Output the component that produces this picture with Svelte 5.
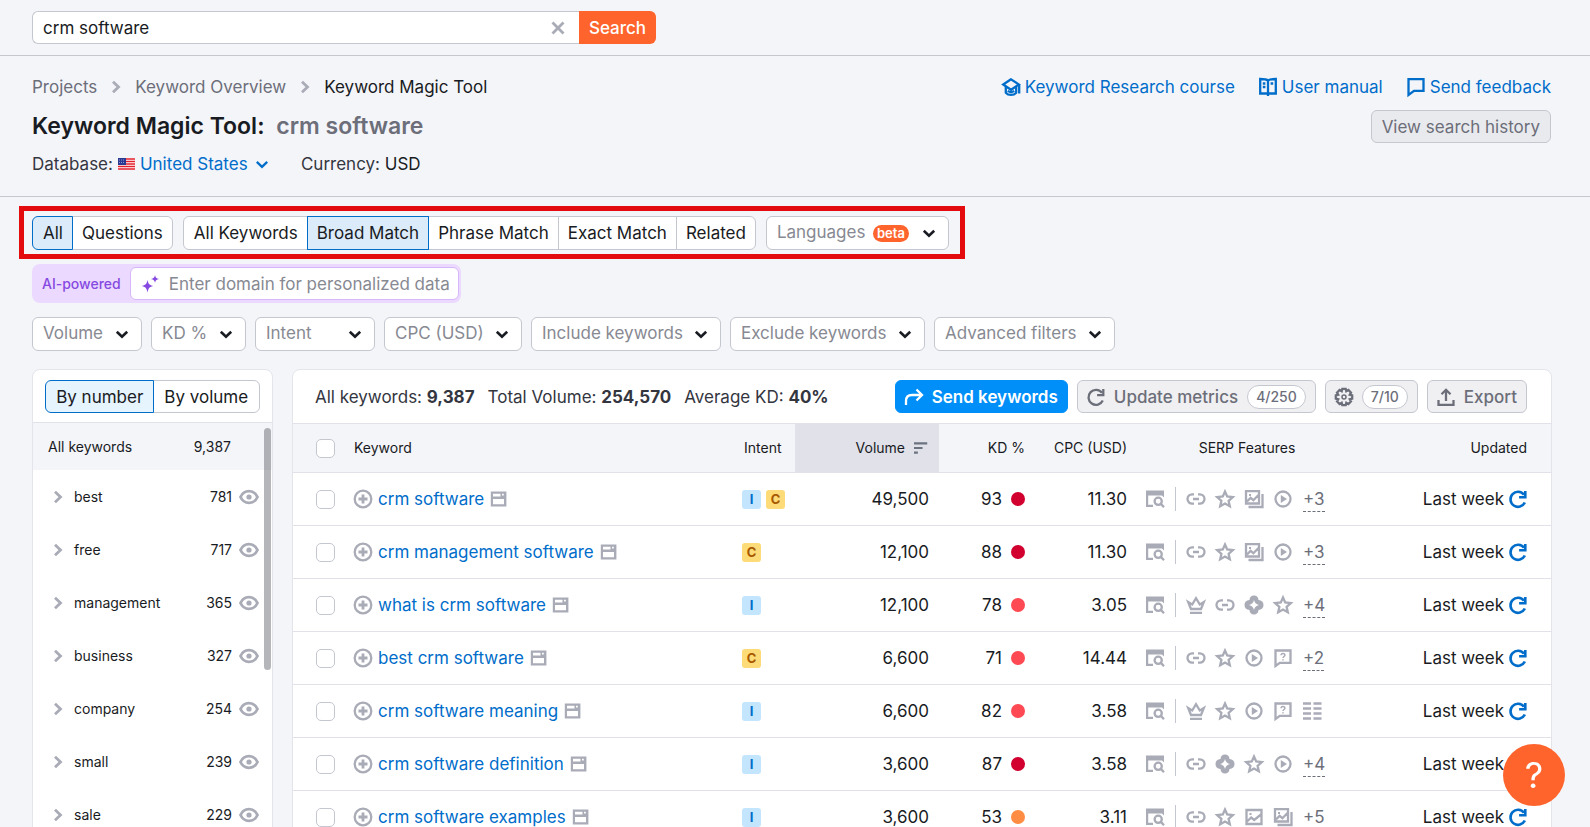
<script lang="ts">
  type Row = {
    keyword: string;
    intent: string[];
    volume: string;
    kd: number;
    cpc: string;
    serp: string[];
    more?: number;
  };

  let query = $state("crm software");
  let domain = $state("");
  let scope = $state("All");
  let match = $state("Broad Match");
  let sortBy = $state("By number");

  const scopes = ["All", "Questions"];
  const matches = ["All Keywords", "Broad Match", "Phrase Match", "Exact Match", "Related"];
  const sorts = ["By number", "By volume"];
  const filters = ["Volume", "KD %", "Intent", "CPC (USD)", "Include keywords", "Exclude keywords", "Advanced filters"];

  const groups = [
    { name: "best", count: 781 },
    { name: "free", count: 717 },
    { name: "management", count: 365 },
    { name: "business", count: 327 },
    { name: "company", count: 254 },
    { name: "small", count: 239 },
    { name: "sale", count: 229 },
  ];

  const rows: Row[] = [
    { keyword: "crm software", intent: ["I", "C"], volume: "49,500", kd: 93, cpc: "11.30", serp: ["link", "star", "images", "play"], more: 3 },
    { keyword: "crm management software", intent: ["C"], volume: "12,100", kd: 88, cpc: "11.30", serp: ["link", "star", "images", "play"], more: 3 },
    { keyword: "what is crm software", intent: ["I"], volume: "12,100", kd: 78, cpc: "3.05", serp: ["crown", "link", "ai", "star"], more: 4 },
    { keyword: "best crm software", intent: ["C"], volume: "6,600", kd: 71, cpc: "14.44", serp: ["link", "star", "play", "ask"], more: 2 },
    { keyword: "crm software meaning", intent: ["I"], volume: "6,600", kd: 82, cpc: "3.58", serp: ["crown", "star", "play", "ask", "list"] },
    { keyword: "crm software definition", intent: ["I"], volume: "3,600", kd: 87, cpc: "3.58", serp: ["link", "ai", "star", "play"], more: 4 },
    { keyword: "crm software examples", intent: ["I"], volume: "3,600", kd: 53, cpc: "3.11", serp: ["link", "star", "image", "images"], more: 5 },
  ];

  function kdLevel(kd: number): string {
    if (kd >= 85) return "very-hard";
    return kd >= 70 ? "hard" : "difficult";
  }

  // 18x18 glyphs, drawn with the current colour
  const icons: Record<string, string> = {
    right: '<path class="bold" d="M6 3.800 11.500 9 6 14.200"/>',
    down: '<path d="M3.800 6.800 9 11.800l5.200-5"/>',
    close: '<path class="bold" d="m3.500 3.500 11 11M14.500 3.500l-11 11"/>',
    course: '<path d="M9 1.300 1.200 6.500 9 11.800l7.800-5.300z"/><path d="M3.800 8.500v6.200c2.500 3 7.900 3 10.400 0V8.500M5.800 12.800c2 1.500 4.400 1.500 6.400 0M17.200 6.500v9"/>',
    book: '<path d="M9 2.600C7.500 1 5 1 1.200 1v14.500H9h7.800V1C13 1 10.500 1 9 2.600zM9 2.600V18M3.800 5.500h2.600M3.800 9h2.600M11.600 5.500h2.600"/>',
    chat: '<path d="M1.500 1.200h15v11.600H7L1.500 17z"/>',
    eye: '<path class="bold" d="M0.500 9c1.800-4 5-5.800 8.500-5.800s6.700 1.800 8.500 5.800c-1.800 4-5 5.800-8.500 5.800S2.300 13 .5 9z"/><circle class="fill" cx="9" cy="9" r="2.600"/>',
    plus: '<circle cx="9" cy="9" r="8.300"/><path class="bold" d="M9 4.500v9M4.500 9h9"/>',
    page: '<path class="fill" fill-rule="evenodd" d="M.8 1.500h15.600v15H.8zM3 3.800v2.800h7.500V3.800zM12 3.800v1.800h1.800V3.800zM3 9v5.200h11V9z"/>',
    send: '<path d="M1 17v-4c0-3.800 2-6 6-6h10M11.500 1.500 17 7l-5.500 5.500"/>',
    refresh: '<path d="M15.800 12.500A7.500 7.500 0 1 1 15 4.800"/><path d="M16.300 1v6.200h-6.200"/>',
    gear: '<path d="M7.300.8h3.400l.6 2.400 2.100-1.200 2.600 2.600-1.200 2.100 2.400.6v3.400l-2.400.6 1.200 2.100-2.600 2.600-2.100-1.200-.6 2.400H7.300l-.6-2.400L4.600 16 2 13.400l1.200-2.100-2.400-.6V7.300l2.400-.6L2 4.600 4.600 2l2.100 1.200z"/><circle class="thin" cx="9" cy="9" r="2"/>',
    export: '<path d="M1.500 12v4.800h15V12M9 13V2M4.500 6.200 9 1.800l4.500 4.400"/>',
    sort: '<path class="bold" d="M0 3h17M0 9h11M0 15h5"/>',
    serp: '<path class="fill" d="M0 .5h18v7l-2-2H2.200v9.300H7V17H0z"/><circle cx="12.200" cy="11.300" r="3.600"/><path d="m14.900 13.900 3.100 3.300"/>',
    link: '<path d="M7 4.300H5.200a4.500 4.500 0 0 0 0 9.400H7M11 4.300h1.800a4.500 4.500 0 0 1 0 9.400H11M6 9h6"/>',
    star: '<path d="m9 1.500 2.200 5 5.600.6-4.200 3.700 1.200 5.500L9 13.500l-4.800 2.800 1.200-5.500-4.200-3.700 5.600-.6z"/>',
    image: '<path d="M1.500 2h15v14h-15zM2 13.500 6.200 9.500l3 2.500L16 6.500"/><path class="fill" d="M4.500 5h2v2h-2z"/>',
    images: '<path d="M1 1.200h13v12.300H1zM2 11.500l3.600-3.600 2.800 2.300L13.500 5M17.500 4v13H3.500"/><path class="fill" d="M4 4h2v2H4z"/>',
    play: '<circle cx="9" cy="9" r="7.500"/><path class="fill" d="M6.800 5 13 9l-6.200 4z"/>',
    crown: '<path d="M1.200 6 4 13h10l2.800-7-4 2.500L9 2.200 5.200 8.500zM3 16.800h12"/>',
    ai: '<path class="fill" fill-rule="evenodd" d="M9-.5c2.800 0 4.300 1.700 4.500 4.500 3.200.3 5 2.300 5 5s-1.800 4.700-5 5c-.2 2.800-1.700 4.500-4.500 4.500S4.700 16.800 4.500 14c-3.200-.3-5-2.300-5-5s1.800-4.700 5-5C4.700 1.200 6.200-.5 9-.5zM9 4C8.200 7 7 8.200 4 9c3 .8 4.200 2 5 5 .8-3 2-4.200 5-5-3-.8-4.200-2-5-5z"/>',
    ask: '<path d="M1.500 1.500h15v12.300H5.800L1.500 17z"/><path class="thin" d="M7.100 6.200c0-2.400 3.800-2.400 3.800 0 0 1.300-1.900 1.300-1.900 2.800M9 10.300v1.200"/>',
    list: '<path d="M0 1.500h8M10.500 1.500h8M0 6.500h8M10.500 6.500h8M0 11.500h8M10.500 11.500h8M0 16.500h8M10.500 16.500h8"/>',
    spark: '<path class="fill" d="M6.500 5c.8 4 2 5.200 6 6-4 .8-5.200 2-6 6.500-.8-4.500-2-5.700-6-6.500 4-.8 5.200-2 6-6zM14 0c.5 2.700 1.300 3.500 4 4-2.700.5-3.500 1.300-4 4-.5-2.700-1.300-3.500-4-4 2.700-.5 3.500-1.300 4-4z"/>',
  };
</script>

{#snippet icon(name: string)}
  <svg class="icon" viewBox="0 0 18 18" aria-hidden="true">{@html icons[name]}</svg>
{/snippet}

{#snippet pills(items: string[], current: string, pick: (v: string) => void)}
  <div class="pills">
    {#each items as item}
      <button class:active={item === current} onclick={() => pick(item)}>{item}</button>
    {/each}
  </div>
{/snippet}

<header class="topbar">
  <form class="search" onsubmit={(e) => e.preventDefault()}>
    <div class="search-box">
      <input type="text" aria-label="Keyword" bind:value={query} />
      <button type="button" class="clear" aria-label="Clear" onclick={() => (query = "")}>{@render icon("close")}</button>
    </div>
    <button class="search-btn">Search</button>
  </form>
</header>

<section class="intro">
  <div class="intro-left">
    <nav class="crumbs" aria-label="Breadcrumbs">
      <a href="#projects">Projects</a>
      {@render icon("right")}
      <a href="#overview">Keyword Overview</a>
      {@render icon("right")}
      <span>Keyword Magic Tool</span>
    </nav>
    <h1>Keyword Magic Tool: <span>crm software</span></h1>
    <div class="meta">
      <label class="database">
        <span>Database:</span>
        <svg class="flag" viewBox="0 0 17 12" aria-hidden="true">
          <rect width="17" height="12" fill="#fff" />
          <path d="M0 1h17M0 3.500h17M0 6h17M0 8.500h17M0 11h17" stroke="#e5202e" stroke-width="1.500" />
          <rect width="8" height="7" fill="#2b3990" />
          <path d="M1 2h6M1 4.500h6" stroke="#8d97d2" stroke-dasharray="1 1" />
        </svg>
        <span class="picker">
          <select><option>United States</option></select>
          {@render icon("down")}
        </span>
      </label>
      <span>Currency: <b>USD</b></span>
    </div>
  </div>
  <div class="intro-right">
    <div class="links">
      <a href="#course">{@render icon("course")}Keyword Research course</a>
      <a href="#manual">{@render icon("book")}User manual</a>
      <a href="#feedback">{@render icon("chat")}Send feedback</a>
    </div>
    <button class="btn history">View search history</button>
  </div>
</section>

<section class="controls">
  <div class="highlight">
    {@render pills(scopes, scope, (v) => (scope = v))}
    {@render pills(matches, match, (v) => (match = v))}
    <label class="filter languages">
      <select aria-label="Languages"><option>Languages</option></select>
      <span class="beta">beta</span>
      {@render icon("down")}
    </label>
  </div>

  <label class="ai">
    <span class="ai-label">AI-powered</span>
    <span class="ai-box">
      {@render icon("spark")}
      <input type="text" placeholder="Enter domain for personalized data" bind:value={domain} />
    </span>
  </label>

  <div class="filters">
    {#each filters as name}
      <label class="filter" class:wide={name === "Intent"}>
        <select aria-label={name}><option>{name}</option></select>
        {@render icon("down")}
      </label>
    {/each}
  </div>
</section>

<main>
  <aside class="panel">
    <div class="sorts">
      {@render pills(sorts, sortBy, (v) => (sortBy = v))}
    </div>
    <div class="groups">
      <div class="total"><span>All keywords</span><span>9,387</span></div>
      <ul>
        {#each groups as g}
          <li>
            <button class="toggle" aria-label="Expand {g.name}">{@render icon("right")}</button>
            <span class="name">{g.name}</span>
            <span>{g.count}</span>
            <button class="toggle eye" aria-label="Exclude {g.name}">{@render icon("eye")}</button>
          </li>
        {/each}
      </ul>
      <div class="thumb"></div>
    </div>
  </aside>

  <div class="panel results">
    <div class="toolbar">
      <div class="stats">
        <span>All keywords: <b>9,387</b></span>
        <span>Total Volume: <b>254,570</b></span>
        <span>Average KD: <b>40%</b></span>
      </div>
      <div class="actions">
        <button class="btn primary">{@render icon("send")}Send keywords</button>
        <button class="btn">{@render icon("refresh")}Update metrics<span class="quota">4/250</span></button>
        <button class="btn" aria-label="Settings, 7 of 10 columns">{@render icon("gear")}<span class="quota">7/10</span></button>
        <button class="btn">{@render icon("export")}Export</button>
      </div>
    </div>

    <table>
      <colgroup>
        <col class="c-check" /><col /><col class="c-intent" /><col class="c-volume" />
        <col class="c-kd" /><col class="c-cpc" /><col class="c-serp" /><col class="c-updated" />
      </colgroup>
      <thead>
        <tr>
          <th class="check"><input type="checkbox" aria-label="Select all" /></th>
          <th>Keyword</th>
          <th class="intent">Intent</th>
          <th class="num volume sorted"><span>Volume{@render icon("sort")}</span></th>
          <th class="num">KD %</th>
          <th class="num">CPC (USD)</th>
          <th class="serp-head">SERP Features</th>
          <th class="num updated">Updated</th>
        </tr>
      </thead>
      <tbody>
        {#each rows as row}
          <tr>
            <td class="check"><input type="checkbox" aria-label="Select {row.keyword}" /></td>
            <td>
              <div class="cell keyword">
                <button class="toggle" aria-label="Add {row.keyword}">{@render icon("plus")}</button>
                <a href="#keyword">{row.keyword}</a>
                {@render icon("page")}
              </div>
            </td>
            <td class="intent">
              <div class="cell badges">
                {#each row.intent as i}<span class="badge {i}">{i}</span>{/each}
              </div>
            </td>
            <td class="num volume">{row.volume}</td>
            <td class="num"><div class="cell kd">{row.kd}<i class="dot {kdLevel(row.kd)}"></i></div></td>
            <td class="num">{row.cpc}</td>
            <td class="serp">
              <div class="cell features">
                {@render icon("serp")}
                <span class="rule"></span>
                {#each row.serp as f}{@render icon(f)}{/each}
                {#if row.more}<button class="more">+{row.more}</button>{/if}
              </div>
            </td>
            <td class="num updated">
              <div class="cell week">Last week<button class="toggle" aria-label="Refresh">{@render icon("refresh")}</button></div>
            </td>
          </tr>
        {/each}
      </tbody>
    </table>
  </div>
</main>

<button class="help" aria-label="Help">?</button>

<style>
  :global(html) { scrollbar-width: none; }
  :global(body) { background: #f4f5f9; color: #191b23; font: 17px/24px Inter, "Liberation Sans", sans-serif; }
  :global(#app *) { box-sizing: border-box; }

  button, input, select { font: inherit; color: inherit; margin: 0; }
  button { padding: 0; border: 0; background: none; cursor: pointer; }
  a { color: #006dca; text-decoration: none; }
  select { appearance: none; border: 0; background: none; cursor: pointer; }

  .icon { width: 18px; height: 18px; flex: none; fill: none; stroke: currentColor; stroke-width: 2.3; overflow: visible; }
  .icon :global(.fill) { fill: currentColor; stroke: none; }
  .icon :global(.thin) { stroke-width: 1.5; }
  .icon :global(.bold) { stroke-width: 2.8; }

  .topbar { padding: 11px 32px; border-bottom: 1px solid #c4c7cf; }
  .search { display: flex; max-width: 624px; }
  .search-box { flex: 1; display: flex; align-items: center; height: 33px; background: #fff; border: 1px solid #c4c7cf; border-right: 0; border-radius: 6px 0 0 6px; }
  .search-box input { flex: 1; min-width: 0; height: 100%; padding: 0 10px; border: 0; background: none; outline: none; }
  .clear { display: flex; padding: 0 12px; color: #a9abb6; }
  .search-btn { padding: 0 10px; background: #ff642d; color: #fff; font-weight: 500; border-radius: 0 6px 6px 0; }

  .intro { display: flex; justify-content: space-between; padding: 19px 39px 20px 32px; border-bottom: 1px solid #c4c7cf; }
  .crumbs { display: flex; align-items: center; gap: 10px; }
  .crumbs a { color: #6c6e79; }
  .crumbs .icon { color: #a9abb6; }
  h1 { margin: 11px 0 10px; font-size: 23px; line-height: 32px; font-weight: 600; }
  h1 span { margin-left: 6px; color: #6c6e79; }
  .meta { display: flex; gap: 30px; color: #34363f; }
  .meta b { font-weight: 400; color: #191b23; }
  .database { display: flex; align-items: center; gap: 5px; }
  .flag { width: 17px; height: 12px; }
  .picker { display: flex; align-items: center; gap: 5px; color: #006dca; }
  .picker select { padding: 0; }
  .intro-right { display: flex; flex-direction: column; align-items: flex-end; gap: 11px; }
  .links { display: flex; gap: 24px; }
  .links a { display: flex; align-items: center; gap: 5px; }

  .btn { display: flex; align-items: center; gap: 9px; height: 33px; padding: 0 9px; border: 1px solid #c4c7cf; border-radius: 6px; background: #f0f0f2; color: #6c6e79; font-weight: 500; white-space: nowrap; }
  .history { padding: 0 10px; background: #e9eaee; font-weight: 400; }
  .primary { background: #008ff8; border-color: #008ff8; color: #fff; font-weight: 600; }
  .quota { padding: 0 8px; border: 1px solid #c4c7cf; border-radius: 12px; background: #fff; font-size: 14px; line-height: 22px; }

  .controls { display: flex; flex-direction: column; align-items: flex-start; padding: 9px 20px 0 19px; }
  .highlight { display: flex; gap: 10px; padding: 5px 11px 4px 8px; border: 5px solid #e30b0d; }
  .pills { display: flex; height: 34px; }
  .pills button { padding: 0 9px; background: #fff; border: 1px solid #c4c7cf; margin-left: -1px; white-space: nowrap; }
  .pills button:first-child { margin-left: 0; padding-left: 10px; border-radius: 6px 0 0 6px; }
  .pills button:last-child { border-radius: 0 6px 6px 0; }
  .pills button.active { background: #dcebf9; border-color: #006dca; z-index: 1; }

  .filter { display: grid; align-items: center; height: 34px; border: 1px solid #c4c7cf; border-radius: 6px; background: #fff; color: #878992; }
  .filter select { grid-area: 1 / 1; height: 32px; padding: 0 37px 2px 10px; }
  .filter .icon { grid-area: 1 / 1; justify-self: end; margin-right: 10px; color: #191b23; stroke-width: 2.6; pointer-events: none; }
  .filter.wide select { padding-right: 62px; }
  .languages select { padding-right: 82px; }
  .beta { grid-area: 1 / 1; justify-self: end; margin-right: 39px; padding: 0 4px; border-radius: 9px; background: #ff642d; color: #fff; font-size: 13px; line-height: 17px; font-weight: 600; pointer-events: none; }

  .ai { display: flex; align-items: center; margin: 5px 0 14px 13px; padding: 3px 2px 3px 10px; border-radius: 8px; background: #ecd9ff; }
  .ai-label { margin-right: 9px; color: #8649e1; font-size: 14px; font-weight: 500; }
  .ai-box { display: flex; align-items: center; gap: 10px; width: 329px; height: 33px; padding: 0 4px 0 10px; border: 1px solid #d6b8fa; border-radius: 6px; background: #fff; color: #8649e1; }
  .ai-box input { flex: 1; min-width: 0; padding: 0; border: 0; outline: none; color: #191b23; }
  .ai-box input::placeholder { color: #878992; opacity: 1; }
  .filters { display: flex; gap: 9px; margin-left: 13px; }

  main { display: flex; align-items: flex-start; gap: 19px; padding: 18px 38px 0 32px; }
  .panel { background: #fff; border: 1px solid #e4e5ea; border-radius: 8px; }
  aside { flex: none; width: 241px; font-size: 14px; }
  .sorts { padding: 10px 12px 9px; border-bottom: 1px solid #e0e1e9; font-size: 17px; }
  .sorts .pills { height: 33px; }
  .sorts .pills :global(button) { flex: 1; }
  .sorts .pills :global(.active) { background: #e6f4fe; }
  .groups { position: relative; }
  .total { display: flex; justify-content: space-between; align-items: center; height: 47px; padding: 0 41px 0 15px; background: #f4f5f9; }
  ul { list-style: none; margin: 0; padding: 0; }
  li { display: flex; align-items: center; height: 53px; padding: 0 14px 0 16px; }
  .name { flex: 1; margin-left: 7px; }
  .toggle { display: flex; color: #a9abb6; }
  .eye { margin-left: 8px; }
  .thumb { position: absolute; top: 5px; right: 1px; width: 7px; height: 242px; border-radius: 4px; background: rgba(60, 62, 70, 0.38); }

  .results { flex: 1; min-width: 0; overflow: hidden; }
  .toolbar { display: flex; justify-content: space-between; align-items: center; padding: 10px 24px 10px 22px; }
  .stats { display: flex; gap: 13px; color: #34363f; white-space: nowrap; }
  .stats b { font-weight: 700; }
  .actions { display: flex; gap: 9px; }

  table { width: 100%; table-layout: fixed; border-collapse: collapse; }
  .c-check { width: 61px; }
  .c-intent { width: 61px; }
  .c-volume { width: 144px; }
  .c-kd { width: 94px; }
  .c-cpc { width: 102px; }
  .c-serp { width: 224px; }
  .c-updated { width: 192px; }
  th, td { padding: 0; border-top: 1px solid #e0e1e9; text-align: left; white-space: nowrap; }
  th { height: 49px; background: #f4f5f9; font-size: 14px; font-weight: 400; }
  td { height: 53px; }
  th.check, td.check { padding-left: 23px; }
  input[type="checkbox"] { appearance: none; display: block; width: 19px; height: 19px; border: 1px solid #c4c7cf; border-radius: 5px; background: #fff; }
  td.intent { padding-left: 8px; }
  th.intent { padding-left: 10px; }
  .num { padding-right: 8px; text-align: right; }
  .volume { padding-right: 10px; }
  .updated { padding-right: 24px; }
  .sorted { background: #e0e1e9; }
  .sorted span { display: flex; align-items: center; justify-content: flex-end; gap: 8px; }
  .sorted .icon { width: 16px; height: 14px; color: #6c7480; }
  .serp-head { text-align: center; }
  .cell { display: flex; align-items: center; }
  .keyword { gap: 6px; }
  .keyword .icon { color: #a9abb6; }
  .badges { gap: 5px; }
  .badge { width: 19px; border-radius: 3px; font-size: 13px; line-height: 19px; font-weight: 700; text-align: center; }
  .I { background: #c4e5fe; color: #006dca; }
  .C { background: #fcdb78; color: #a75800; }
  .kd { justify-content: flex-end; gap: 9px; }
  .dot { width: 14px; height: 14px; border-radius: 50%; }
  .very-hard { background: #d1002f; }
  .hard { background: #ff4953; }
  .difficult { background: #ff8c43; }
  .serp { padding-left: 11px; }
  .features { gap: 11px; color: #a9abb6; }
  .rule { width: 1px; height: 24px; background: #c4c7cf; }
  .more { border-bottom: 1px dashed #6c6e79; color: #6c6e79; }
  .week { justify-content: flex-end; gap: 5px; }
  .week .toggle { color: #006dca; }
  .week .icon { stroke-width: 2.6; }

  .help { position: fixed; right: 25px; bottom: 21px; width: 62px; height: 62px; border-radius: 50%; background: #ff642d; color: #fff; font-size: 36px; }
</style>
